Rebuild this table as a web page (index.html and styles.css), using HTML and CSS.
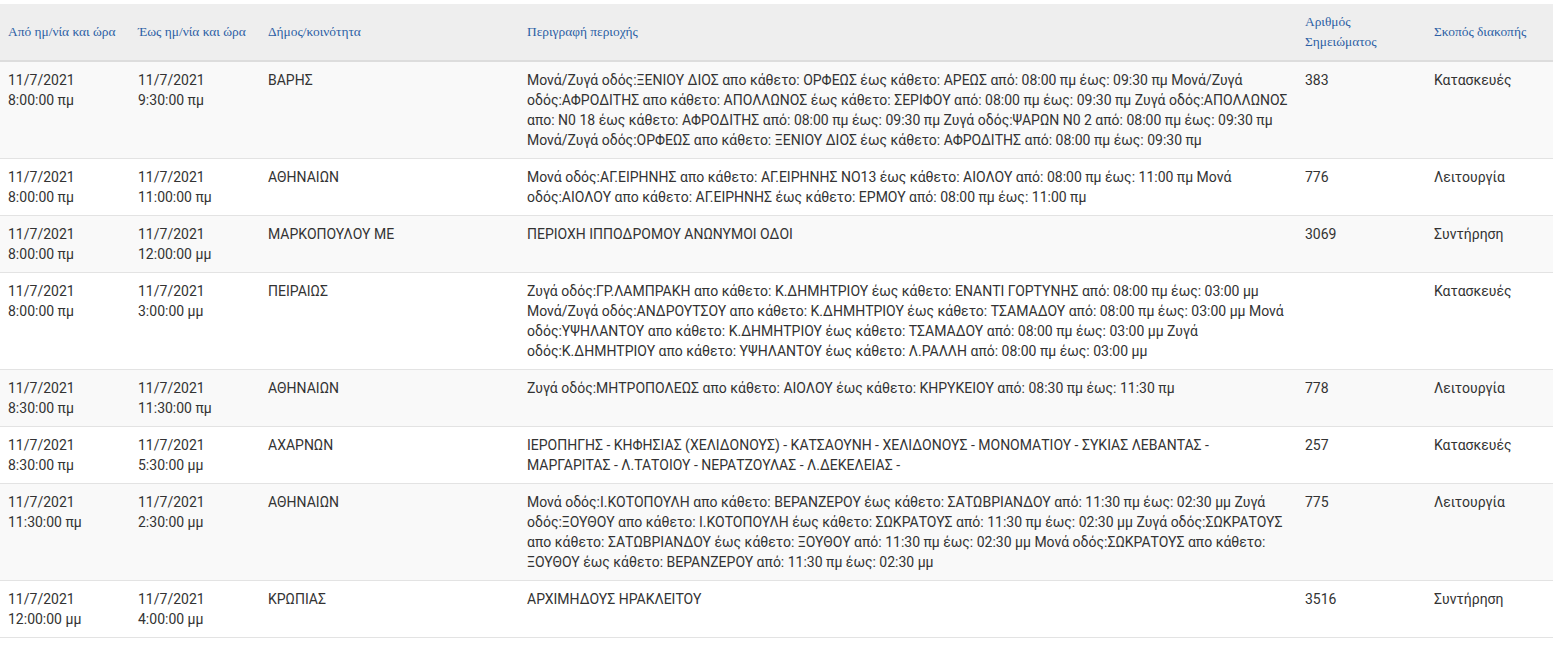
FILE: index.html
```html
<!DOCTYPE html>
<html lang="el">
<head>
    <meta charset="UTF-8">
    <meta name="viewport" content="width=device-width, initial-scale=1.0">
    <title>Διακοπές ρεύματος</title>
    <link rel="stylesheet" href="styles.css">
</head>
<body>
    <table class="outages">
        <colgroup>
            <col class="c-from">
            <col class="c-to">
            <col class="c-muni">
            <col class="c-desc">
            <col class="c-num">
            <col class="c-reason">
        </colgroup>
        <thead>
            <tr>
                <th>Από ημ/νία και ώρα</th>
                <th>Έως ημ/νία και ώρα</th>
                <th>Δήμος/κοινότητα</th>
                <th>Περιγραφή περιοχής</th>
                <th>Αριθμός Σημειώματος</th>
                <th>Σκοπός διακοπής</th>
            </tr>
        </thead>
        <tbody>
            <tr>
                <td>11/7/2021<br>8:00:00 πμ</td>
                <td>11/7/2021<br>9:30:00 πμ</td>
                <td>ΒΑΡΗΣ</td>
                <td>Μονά/Ζυγά οδός:ΞΕΝΙΟΥ ΔΙΟΣ απο κάθετο: ΟΡΦΕΩΣ έως κάθετο: ΑΡΕΩΣ από: 08:00 πμ έως: 09:30 πμ Μονά/Ζυγά οδός:ΑΦΡΟΔΙΤΗΣ απο κάθετο: ΑΠΟΛΛΩΝΟΣ έως κάθετο: ΣΕΡΙΦΟΥ από: 08:00 πμ έως: 09:30 πμ Ζυγά οδός:ΑΠΟΛΛΩΝΟΣ απο: Ν0 18 έως κάθετο: ΑΦΡΟΔΙΤΗΣ από: 08:00 πμ έως: 09:30 πμ Ζυγά οδός:ΨΑΡΩΝ Ν0 2 από: 08:00 πμ έως: 09:30 πμ Μονά/Ζυγά οδός:ΟΡΦΕΩΣ απο κάθετο: ΞΕΝΙΟΥ ΔΙΟΣ έως κάθετο: ΑΦΡΟΔΙΤΗΣ από: 08:00 πμ έως: 09:30 πμ</td>
                <td>383</td>
                <td>Κατασκευές</td>
            </tr>
            <tr>
                <td>11/7/2021<br>8:00:00 πμ</td>
                <td>11/7/2021<br>11:00:00 πμ</td>
                <td>ΑΘΗΝΑΙΩΝ</td>
                <td>Μονά οδός:ΑΓ.ΕΙΡΗΝΗΣ απο κάθετο: ΑΓ.ΕΙΡΗΝΗΣ ΝΟ13 έως κάθετο: ΑΙΟΛΟΥ από: 08:00 πμ έως: 11:00 πμ Μονά οδός:ΑΙΟΛΟΥ απο κάθετο: ΑΓ.ΕΙΡΗΝΗΣ έως κάθετο: ΕΡΜΟΥ από: 08:00 πμ έως: 11:00 πμ</td>
                <td>776</td>
                <td>Λειτουργία</td>
            </tr>
            <tr>
                <td>11/7/2021<br>8:00:00 πμ</td>
                <td>11/7/2021<br>12:00:00 μμ</td>
                <td>ΜΑΡΚΟΠΟΥΛΟΥ ΜΕ</td>
                <td>ΠΕΡΙΟΧΗ ΙΠΠΟΔΡΟΜΟΥ ΑΝΩΝΥΜΟΙ ΟΔΟΙ</td>
                <td>3069</td>
                <td>Συντήρηση</td>
            </tr>
            <tr>
                <td>11/7/2021<br>8:00:00 πμ</td>
                <td>11/7/2021<br>3:00:00 μμ</td>
                <td>ΠΕΙΡΑΙΩΣ</td>
                <td>Ζυγά οδός:ΓΡ.ΛΑΜΠΡΑΚΗ απο κάθετο: Κ.ΔΗΜΗΤΡΙΟΥ έως κάθετο: ΕΝΑΝΤΙ ΓΟΡΤΥΝΗΣ από: 08:00 πμ έως: 03:00 μμ Μονά/Ζυγά οδός:ΑΝΔΡΟΥΤΣΟΥ απο κάθετο: Κ.ΔΗΜΗΤΡΙΟΥ έως κάθετο: ΤΣΑΜΑΔΟΥ από: 08:00 πμ έως: 03:00 μμ Μονά οδός:ΥΨΗΛΑΝΤΟΥ απο κάθετο: Κ.ΔΗΜΗΤΡΙΟΥ έως κάθετο: ΤΣΑΜΑΔΟΥ από: 08:00 πμ έως: 03:00 μμ Ζυγά οδός:Κ.ΔΗΜΗΤΡΙΟΥ απο κάθετο: ΥΨΗΛΑΝΤΟΥ έως κάθετο: Λ.ΡΑΛΛΗ από: 08:00 πμ έως: 03:00 μμ</td>
                <td></td>
                <td>Κατασκευές</td>
            </tr>
            <tr>
                <td>11/7/2021<br>8:30:00 πμ</td>
                <td>11/7/2021<br>11:30:00 πμ</td>
                <td>ΑΘΗΝΑΙΩΝ</td>
                <td>Ζυγά οδός:ΜΗΤΡΟΠΟΛΕΩΣ απο κάθετο: ΑΙΟΛΟΥ έως κάθετο: ΚΗΡΥΚΕΙΟΥ από: 08:30 πμ έως: 11:30 πμ</td>
                <td>778</td>
                <td>Λειτουργία</td>
            </tr>
            <tr>
                <td>11/7/2021<br>8:30:00 πμ</td>
                <td>11/7/2021<br>5:30:00 μμ</td>
                <td>ΑΧΑΡΝΩΝ</td>
                <td>ΙΕΡΟΠΗΓΗΣ - ΚΗΦΗΣΙΑΣ (ΧΕΛΙΔΟΝΟΥΣ) - ΚΑΤΣΑΟΥΝΗ - ΧΕΛΙΔΟΝΟΥΣ - ΜΟΝΟΜΑΤΙΟΥ - ΣΥΚΙΑΣ ΛΕΒΑΝΤΑΣ - ΜΑΡΓΑΡΙΤΑΣ - Λ.ΤΑΤΟΙΟΥ - ΝΕΡΑΤΖΟΥΛΑΣ - Λ.ΔΕΚΕΛΕΙΑΣ -</td>
                <td>257</td>
                <td>Κατασκευές</td>
            </tr>
            <tr>
                <td>11/7/2021<br>11:30:00 πμ</td>
                <td>11/7/2021<br>2:30:00 μμ</td>
                <td>ΑΘΗΝΑΙΩΝ</td>
                <td>Μονά οδός:Ι.ΚΟΤΟΠΟΥΛΗ απο κάθετο: ΒΕΡΑΝΖΕΡΟΥ έως κάθετο: ΣΑΤΩΒΡΙΑΝΔΟΥ από: 11:30 πμ έως: 02:30 μμ Ζυγά οδός:ΞΟΥΘΟΥ απο κάθετο: Ι.ΚΟΤΟΠΟΥΛΗ έως κάθετο: ΣΩΚΡΑΤΟΥΣ από: 11:30 πμ έως: 02:30 μμ Ζυγά οδός:ΣΩΚΡΑΤΟΥΣ απο κάθετο: ΣΑΤΩΒΡΙΑΝΔΟΥ έως κάθετο: ΞΟΥΘΟΥ από: 11:30 πμ έως: 02:30 μμ Μονά οδός:ΣΩΚΡΑΤΟΥΣ απο κάθετο: ΞΟΥΘΟΥ έως κάθετο: ΒΕΡΑΝΖΕΡΟΥ από: 11:30 πμ έως: 02:30 μμ</td>
                <td>775</td>
                <td>Λειτουργία</td>
            </tr>
            <tr>
                <td>11/7/2021<br>12:00:00 μμ</td>
                <td>11/7/2021<br>4:00:00 μμ</td>
                <td>ΚΡΩΠΙΑΣ</td>
                <td>ΑΡΧΙΜΗΔΟΥΣ ΗΡΑΚΛΕΙΤΟΥ</td>
                <td>3516</td>
                <td>Συντήρηση</td>
            </tr>
        </tbody>
    </table>
</body>
</html>
```

FILE: styles.css
```css
*{
    padding: 0;
    margin: 0;
    box-sizing: border-box;
}
body{
    font-family: Roboto, "Noto Sans", sans-serif;
    font-size: 14px;
    line-height: 20px;
    color: #333;
    background: #fff;
}
.outages{
    width: 100%;
    margin-top: 4px;
    border-collapse: collapse;
    table-layout: fixed;
}
.c-from{ width: 130px; }
.c-to{ width: 130px; }
.c-muni{ width: 259px; }
.c-desc{ width: 778px; }
.c-num{ width: 129px; }
.c-reason{ width: 127px; }
.outages th{
    padding: 8px;
    background-color: #eee;
    border-bottom: 2px solid #ddd;
    font-family: "Liberation Serif", "DejaVu Serif", serif;
    font-size: 13.4px;
    font-weight: normal;
    line-height: 20px;
    color: #2c5fa5;
    text-align: left;
    vertical-align: middle;
}
.outages td{
    padding: 8px;
    border-bottom: 1px solid #e3e3e3;
    vertical-align: top;
}
.outages tbody tr:nth-child(odd){
    background-color: #f9f9f9;
}
```
